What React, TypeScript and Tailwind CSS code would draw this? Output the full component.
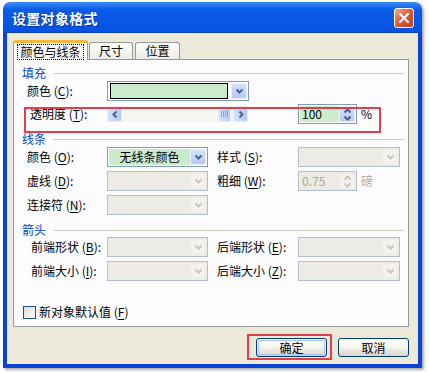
import { clsx as cn } from "clsx";
import type { ReactNode } from "react";

const FONT = "font-['Noto_Sans_CJK_SC','Liberation_Sans',sans-serif]";

function Key({ k }: { k: string }) {
  return <span className="underline underline-offset-[2px]">{k}</span>;
}

function Label({ text, k, className }: { text: string; k: string; className?: string }) {
  return (
    <span className={cn("text-[12px] leading-[14px] text-black whitespace-nowrap", className)}>
      {text} (<Key k={k} />):
    </span>
  );
}

function Chevron({ dim, dir = "down" }: { dim?: boolean; dir?: "down" | "up" | "left" | "right" }) {
  const d = {
    down: "M1.5 1.5 L4.5 4.5 L7.5 1.5",
    up: "M1.5 4.5 L4.5 1.5 L7.5 4.5",
    left: "M4.5 1.5 L1.5 4.5 L4.5 7.5",
    right: "M1.5 1.5 L4.5 4.5 L1.5 7.5",
  }[dir];
  const vertical = dir === "down" || dir === "up";
  return (
    <svg width={vertical ? 9 : 6} height={vertical ? 6 : 9} viewBox={vertical ? "0 0 9 6" : "0 0 6 9"}>
      <path d={d} fill="none" stroke={dim ? "#c9c7ba" : "#4d6185"} strokeWidth="2" />
    </svg>
  );
}

function DropBtn({ dim }: { dim?: boolean }) {
  return (
    <div
      className={cn(
        "w-[16px] h-full flex items-center justify-center rounded-[2px] border shrink-0",
        dim ? "bg-[#f3f2ec] border-[#eceae2]" : "bg-gradient-to-b from-[#d6e2fd] to-[#b4c7f6] border-[#e8eefc]"
      )}
    >
      <Chevron dim={dim} />
    </div>
  );
}

function Combo({ className, dim, children }: { className?: string; dim?: boolean; children?: ReactNode }) {
  return (
    <div
      className={cn(
        "h-[20px] flex border p-px shrink-0",
        dim ? "border-[#b4bfcd] bg-[#ecebe4]" : "border-[#7f9db9] bg-white",
        className
      )}
    >
      <div className="flex-1 min-w-0 h-full">{children}</div>
      <DropBtn dim={dim} />
    </div>
  );
}

function Spin({ value, dim, className }: { value: string; dim?: boolean; className?: string }) {
  return (
    <div
      className={cn(
        "h-[20px] flex border p-px shrink-0",
        dim ? "border-[#b4bfcd] bg-[#ecebe4]" : "border-[#7f9db9] bg-white",
        className
      )}
    >
      <div
        className={cn(
          "flex-1 h-full flex items-center pl-[2px] text-[12px]",
          dim ? "text-[#aca899]" : "text-black bg-[#cdeccd]"
        )}
      >
        {value}
      </div>
      <div
        className={cn(
          "w-[16px] h-full flex flex-col items-center justify-center gap-[1px] rounded-[2px] border",
          dim ? "bg-[#f3f2ec] border-[#eceae2]" : "bg-gradient-to-b from-[#d6e2fd] to-[#b4c7f6] border-[#e8eefc]"
        )}
      >
        <Chevron dim={dim} dir="up" />
        <Chevron dim={dim} dir="down" />
      </div>
    </div>
  );
}

function ScrollBtn({ dir }: { dir: "left" | "right" }) {
  return (
    <div className="w-[15px] h-full flex items-center justify-center rounded-[2px] border border-[#e8eefc] bg-gradient-to-r from-[#d6e2fd] to-[#b4c7f6]">
      <Chevron dir={dir} />
    </div>
  );
}

function Section({ title, className }: { title: string; className?: string }) {
  return (
    <div className={cn("flex items-center h-[14px]", className)}>
      <span className="text-[12px] leading-[14px] text-[#0046d5]">{title}</span>
      <div className="flex-1 h-px bg-[#d0d0bf] ml-[7px]" />
    </div>
  );
}

function XpButton({ children, focused }: { children: ReactNode; focused?: boolean }) {
  return (
    <div className="w-[71px] h-[19px] rounded-[3px] border border-[#003c74] bg-gradient-to-b from-white via-[#f4f3ee] to-[#d8d4c8] p-px">
      <div
        className={cn(
          "w-full h-full rounded-[2px] flex items-center justify-center text-[12px] text-black",
          focused && "border border-[#a8c3f0]"
        )}
      >
        {children}
      </div>
    </div>
  );
}

export default function App() {
  return (
    <div className={cn("w-[429px] h-[372px] bg-white pt-[2px] pl-[3px]", FONT)}>
      <div className="w-[419px] h-[366px] flex flex-col rounded-t-[7px] shadow-[2px_2px_3px_rgba(0,0,0,0.35)]">
        {/* Title bar */}
        <div className="h-[31px] rounded-t-[7px] bg-gradient-to-b from-[#3d8ef7] via-[#0a5ce8] via-25% to-[#0553e0] border-b border-[#0a3fc9] flex items-center pl-[9px] pr-[8px] pt-[2px]">
          <span className="text-white font-bold text-[14px] tracking-[0.3px] [text-shadow:1px_1px_0_#0a2f9c]">设置对象格式</span>
          <div className="ml-auto w-[20px] h-[20px] rounded-[3px] border border-white bg-gradient-to-br from-[#f2a588] via-[#dd5a36] to-[#c23c1e] flex items-center justify-center">
            <svg width="10" height="10" viewBox="0 0 10 10">
              <path d="M1 1 L9 9 M9 1 L1 9" stroke="white" strokeWidth="2.2" strokeLinecap="square" />
            </svg>
          </div>
        </div>

        {/* Body */}
        <div className="flex-1 flex flex-col bg-[#ece9d8] border-x-4 border-b-4 border-[#0b43d2] pt-[7px] pl-[6px] pr-[9px]">
          {/* Tabs */}
          <div className="flex items-end h-[20px] relative z-10 text-[12px] text-black">
            <div className="w-[75px] h-[20px] bg-[#fcfcfe] border-x border-[#919b9c] border-t-[3px] border-t-[#f5b83c] rounded-t-[3px] flex items-center justify-center">
              <span className="px-[2px] leading-[14px] outline outline-1 outline-dotted outline-black">颜色与线条</span>
            </div>
            <div className="w-[44px] h-[17px] ml-[1px] mb-px bg-gradient-to-b from-white to-[#ecebe6] border border-b-0 border-[#919b9c] rounded-t-[3px] flex items-center justify-center">
              尺寸
            </div>
            <div className="w-[45px] h-[17px] ml-[2px] mb-px bg-gradient-to-b from-white to-[#ecebe6] border border-b-0 border-[#919b9c] rounded-t-[3px] flex items-center justify-center">
              位置
            </div>
          </div>

          {/* Panel */}
          <div className="relative -mt-px h-[268px] bg-[#fcfcfe] border border-[#919b9c] pl-[8px] pr-[4px] pt-[6px] flex flex-col">
            <Section title="填充" />
            <div className="flex items-center h-[20px] mt-px pl-[5px]">
              <Label text="颜色" k="C" className="w-[80px]" />
              <Combo className="w-[142px]">
                <div className="h-full ml-px mr-[3px] border border-black bg-[#cdeccd]" />
              </Combo>
            </div>
            <div className="flex items-center h-[20px] mt-[3px] pl-[5px]">
              <Label text="透明度" k="T" className="w-[80px] pl-[3px]" />
              <div className="w-[141px] h-[16px] flex bg-[#f7f6f1] shrink-0">
                <ScrollBtn dir="left" />
                <div className="w-[96px]" />
                <div className="w-[13px] h-full rounded-[2px] border border-[#e8eefc] bg-gradient-to-r from-[#d6e2fd] to-[#b9cbf6] flex items-center justify-center gap-[1px]">
                  <div className="w-px h-[6px] bg-[#8da4d8]" />
                  <div className="w-px h-[6px] bg-[#8da4d8]" />
                  <div className="w-px h-[6px] bg-[#8da4d8]" />
                  <div className="w-px h-[6px] bg-[#8da4d8]" />
                </div>
                <div className="w-[2px]" />
                <ScrollBtn dir="right" />
              </div>
              <div className="w-[50px] shrink-0" />
              <Spin value="100" className="w-[59px]" />
              <span className="ml-[4px] text-[12px]">%</span>
            </div>

            <Section title="线条" className="mt-[8px]" />
            <div className="flex items-center h-[20px] mt-px pl-[5px]">
              <Label text="颜色" k="O" className="w-[80px]" />
              <Combo className="w-[101px]">
                <div className="h-full bg-[#c9ebcc] flex items-center justify-center text-[12px] text-black">无线条颜色</div>
              </Combo>
              <Label text="样式" k="S" className="w-[81px] ml-[9px]" />
              <Combo dim className="w-[102px]" />
            </div>
            <div className="flex items-center h-[20px] mt-[4px] pl-[5px]">
              <Label text="虚线" k="D" className="w-[80px]" />
              <Combo dim className="w-[101px]" />
              <Label text="粗细" k="W" className="w-[81px] ml-[9px]" />
              <Spin dim value="0.75" className="w-[59px]" />
              <span className="ml-[4px] text-[12px] text-[#aca899]">磅</span>
            </div>
            <div className="flex items-center h-[20px] mt-[4px] pl-[5px]">
              <Label text="连接符" k="N" className="w-[80px]" />
              <Combo dim className="w-[101px]" />
            </div>

            <Section title="箭头" className="mt-[8px]" />
            <div className="flex items-center h-[20px] pl-[5px]">
              <Label text="前端形状" k="B" className="w-[80px] pl-[4px]" />
              <Combo dim className="w-[101px]" />
              <Label text="后端形状" k="E" className="w-[81px] ml-[9px]" />
              <Combo dim className="w-[102px]" />
            </div>
            <div className="flex items-center h-[20px] mt-[4px] pl-[5px]">
              <Label text="前端大小" k="I" className="w-[80px] pl-[4px]" />
              <Combo dim className="w-[101px]" />
              <Label text="后端大小" k="Z" className="w-[81px] ml-[9px]" />
              <Combo dim className="w-[102px]" />
            </div>

            <div className="flex items-center h-[14px] mt-[24px] pl-px">
              <div className="w-[13px] h-[13px] border border-[#1c5180] bg-gradient-to-br from-[#dcdcd7] to-white" />
              <span className="ml-[3px] text-[12px] leading-[14px]">
                新对象默认值 (<Key k="F" />)
              </span>
            </div>

            {/* annotation */}
            <div className="absolute left-[10px] top-[47px] w-[357px] h-[26px] border-2 border-[#e0404e]" />
          </div>

          {/* Buttons */}
          <div className="flex justify-end gap-[11px] mt-[11px]">
            <div className="relative">
              <XpButton focused>确定</XpButton>
              <div className="absolute -left-[9px] -top-[4px] -right-[5px] -bottom-[3px] border-2 border-[#e0404e]" />
            </div>
            <XpButton>取消</XpButton>
          </div>
        </div>
      </div>
    </div>
  );
}
